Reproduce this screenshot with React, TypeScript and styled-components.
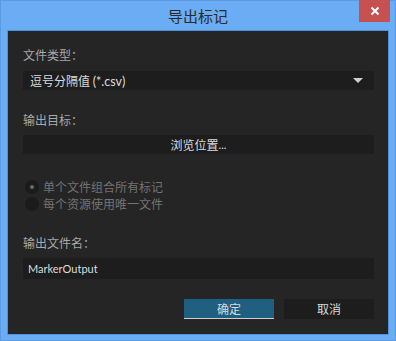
import styled, { createGlobalStyle } from "styled-components";

const Global = createGlobalStyle`
  html, body {
    margin: 0;
    padding: 0;
    background: #6aadf5;
  }
  * {
    box-sizing: border-box;
  }
`;

const Window = styled.div`
  position: relative;
  width: 396px;
  height: 341px;
  background: #6aadf5;
  border: 1px solid #5a9ae2;
  display: flex;
  flex-direction: column;
  padding: 0 6px 5px 6px;
  font-family: "Noto Sans CJK SC", "Noto Sans", sans-serif;
  font-size: 12px;
`;

const TitleBar = styled.div`
  height: 29px;
  display: flex;
  align-items: center;
  justify-content: center;
  color: #2a2a2a;
  font-size: 15px;
`;

const CloseButton = styled.div`
  position: absolute;
  top: -1px;
  right: 5px;
  width: 31px;
  height: 22px;
  background: #c75050;
  display: flex;
  align-items: center;
  justify-content: center;
`;

const Panel = styled.div`
  flex: 1;
  background: #252525;
  border: 1px solid #5292d8;
  padding: 16px 14px 0 15px;
  display: flex;
  flex-direction: column;
`;

const Label = styled.div<{ $top: number }>`
  margin-top: ${(p) => p.$top}px;
  height: 16px;
  line-height: 16px;
  color: #a9a9a9;
`;

const Field = styled.div<{ $top: number; $h?: number; $pad?: number }>`
  margin-top: ${(p) => p.$top}px;
  height: ${(p) => p.$h ?? 19}px;
  background: #1d1d1d;
  color: #dcdcdc;
  display: flex;
  align-items: center;
  padding: 0 ${(p) => p.$pad ?? 7}px;
`;

const SelectText = styled.span`
  flex: 1;
`;

const Arrow = styled.div`
  width: 0;
  height: 0;
  border-left: 5px solid transparent;
  border-right: 5px solid transparent;
  border-top: 5px solid #cfcfcf;
  margin-right: 4px;
`;

const Browse = styled(Field)`
  justify-content: center;
`;

const RadioGroup = styled.div`
  margin-top: 24px;
  display: flex;
  flex-direction: column;
`;

const RadioRow = styled.div`
  height: 17px;
  display: flex;
  align-items: center;
  gap: 4px;
  color: #737373;
  margin-left: 2px;
`;

const RadioDot = styled.div<{ $checked?: boolean }>`
  width: 14px;
  height: 14px;
  border-radius: 50%;
  background: #1b1b1b;
  display: flex;
  align-items: center;
  justify-content: center;
  &::after {
    content: "";
    width: 4px;
    height: 4px;
    border-radius: 50%;
    background: ${(p) => (p.$checked ? "#6a6a6a" : "transparent")};
  }
`;

const Latin = styled.span<{ $size?: number }>`
  font-family: Lato, "Noto Sans", sans-serif;
  font-size: ${(p) => p.$size ?? 11}px;
`;

const Buttons = styled.div`
  margin-top: 20px;
  display: flex;
  justify-content: flex-end;
  gap: 10px;
`;

const Button = styled.div<{ $primary?: boolean }>`
  width: 90px;
  height: 20px;
  display: flex;
  align-items: center;
  justify-content: center;
  color: #dadada;
  background: ${(p) => (p.$primary ? "#1f6081" : "#1d1d1d")};
  border-bottom: 1px solid ${(p) => (p.$primary ? "#cfcfcf" : "#1d1d1d")};
`;

export default function App() {
  return (
    <>
      <Global />
      <Window>
        <TitleBar>导出标记</TitleBar>
        <CloseButton>
          <svg width="10" height="10" viewBox="0 0 10 10">
            <path d="M1.5 1.5 L8.5 8.5 M8.5 1.5 L1.5 8.5" stroke="#fff" strokeWidth="2" />
          </svg>
        </CloseButton>
        <Panel>
          <Label $top={0}>文件类型：</Label>
          <Field $top={8}>
            <SelectText>
              逗号分隔值 <Latin $size={12.5}>(*.csv)</Latin>
            </SelectText>
            <Arrow />
          </Field>
          <Label $top={22}>输出目标：</Label>
          <Browse $top={7}>
            浏览位置<Latin>...</Latin>
          </Browse>
          <RadioGroup>
            <RadioRow>
              <RadioDot $checked />
              单个文件组合所有标记
            </RadioRow>
            <RadioRow>
              <RadioDot />
              每个资源使用唯一文件
            </RadioRow>
          </RadioGroup>
          <Label $top={23}>输出文件名：</Label>
          <Field $top={7} $h={21} $pad={5}>
            <Latin>MarkerOutput</Latin>
          </Field>
          <Buttons>
            <Button $primary>确定</Button>
            <Button>取消</Button>
          </Buttons>
        </Panel>
      </Window>
    </>
  );
}
